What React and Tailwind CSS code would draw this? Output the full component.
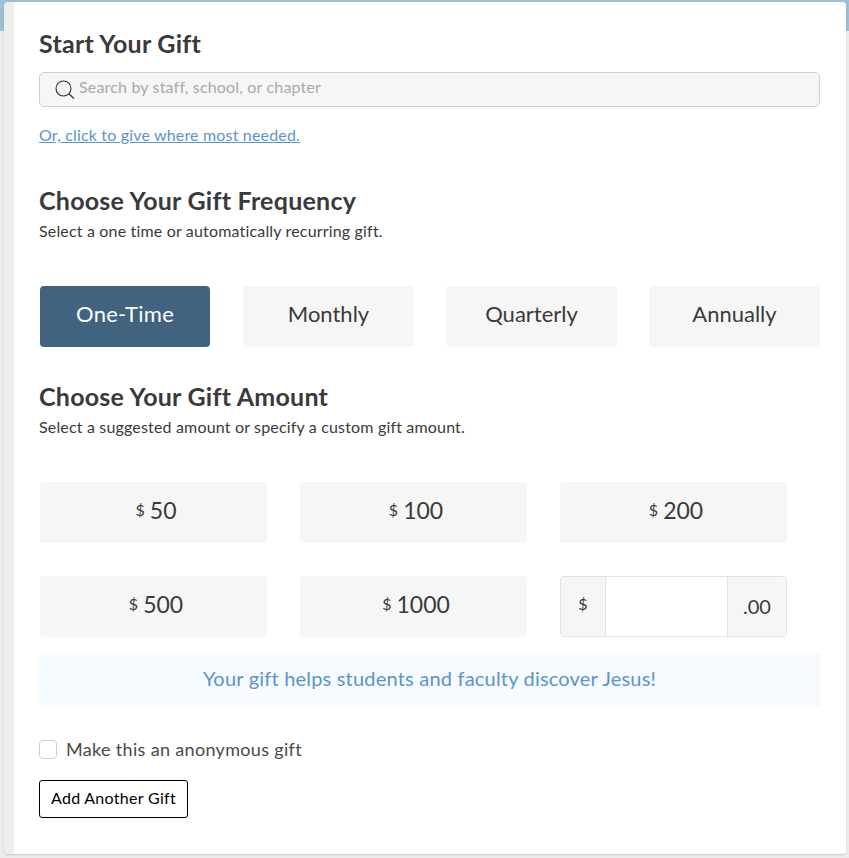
const frequencies = ['One-Time', 'Monthly', 'Quarterly', 'Annually'];
const amounts = [50, 100, 200, 500, 1000];

const SearchIcon = () => (
  <svg width="22" height="22" viewBox="0 0 22 22" fill="none" stroke="#333333" className="shrink-0">
    <circle cx="9.5" cy="9.5" r="7.5" strokeWidth="1.1" />
    <path d="M15 15l5 4.5" strokeWidth="1.3" />
  </svg>
);

const SectionTitle = ({ title, subtitle }) => (
  <div>
    <h2 className="text-[25px] leading-[30px] font-bold tracking-[0.25px] text-[#3a3a3a]">{title}</h2>
    {subtitle && <p className="mt-[6px] text-[16px] leading-[20px] tracking-[0.17px] text-[#3a3a3a]">{subtitle}</p>}
  </div>
);

const AmountButton = ({ value }) => (
  <button className="flex h-[61px] w-[227px] items-center justify-center gap-[5px] rounded-[4px] bg-[#f6f6f6] pl-[5px] pb-[5px] text-[#3a3a3a]">
    <span className="text-[16px]">$</span>
    <span className="text-[23px]">{value}</span>
  </button>
);

export default function App() {
  return (
    <div className="h-[858px] overflow-hidden bg-[linear-gradient(#9fc0d3_31px,#ececec_31px)] pt-[2px] pl-[4px] pr-[3px] font-['Lato',sans-serif]">
      <div className="h-[852px] rounded-[4px] bg-[#eeeeee] pl-[10px] shadow-[0_1px_2px_rgba(0,0,0,0.15)]">
        <div className="h-full rounded-r-[4px] bg-white pl-[25px] pr-[26px] pt-[26px]">
          <SectionTitle title="Start Your Gift" />

          <div className="mt-[14px] flex h-[35px] items-center gap-[3px] rounded-[5px] border border-[#cfcfcf] bg-[#f6f6f6] pl-[14px]">
            <SearchIcon />
            <span className="pb-[5px] text-[16px] tracking-[0.17px] text-[#a9a9a9]">Search by staff, school, or chapter</span>
          </div>
          <a href="#" className="mt-[18px] block text-[16px] leading-[20px] tracking-[0.17px] text-[#5b93cd] underline">
            Or, click to give where most needed.
          </a>

          <div className="mt-[40px]">
            <SectionTitle title="Choose Your Gift Frequency" subtitle="Select a one time or automatically recurring gift." />
          </div>

          <div className="mt-[45px] flex gap-[32px] pl-[1px]">
            {frequencies.map((f, i) => (
              <button
                key={f}
                className={
                  i === 0
                    ? 'mr-[1px] h-[61px] w-[170px] rounded-[4px] bg-[#42637f] pb-[6px] text-[22px] tracking-[0.25px] text-white'
                    : 'h-[61px] w-[171px] rounded-[4px] bg-[#f6f6f6] pb-[6px] text-[22px] text-[#3a3a3a]'
                }
              >
                {f}
              </button>
            ))}
          </div>

          <div className="mt-[34px]">
            <SectionTitle title="Choose Your Gift Amount" subtitle="Select a suggested amount or specify a custom gift amount." />
          </div>

          <div className="mt-[45px] grid grid-cols-[227px_227px_227px] gap-x-[33px] gap-y-[33px] pl-[1px]">
            {amounts.map((a) => (
              <AmountButton key={a} value={a} />
            ))}
            <div className="flex h-[61px] overflow-hidden rounded-[4px] border border-[#e3e3e3] text-[#3a3a3a]">
              <span className="flex w-[45px] items-center justify-center border-r border-[#e3e3e3] bg-[#f6f6f6] pb-[6px] text-[16px]">$</span>
              <input className="w-[121px] bg-white outline-none" />
              <span className="flex flex-1 items-center justify-center border-l border-[#e3e3e3] bg-[#f6f6f6] pb-[2px] text-[20px]">.00</span>
            </div>
          </div>

          <div className="mt-[16px] flex h-[54px] items-center justify-center rounded-[4px] bg-[#f6fbff] pb-[5px] text-[20px] tracking-[0.2px] text-[#5b93cd]">
            Your gift helps students and faculty discover Jesus!
          </div>

          <label className="mt-[31px] flex items-center gap-[9px]">
            <span className="h-[19px] w-[18px] rounded-[4px] border border-[#cfcfcf] bg-white" />
            <span className="text-[18px] leading-[22px] tracking-[0.33px] text-[#4a4a4a]">Make this an anonymous gift</span>
          </label>

          <button className="mt-[20px] block h-[38px] w-[149px] rounded-[3px] border border-black bg-white pb-[3px] text-[16px] tracking-[0.3px] text-black">
            Add Another Gift
          </button>
        </div>
      </div>
    </div>
  );
}
